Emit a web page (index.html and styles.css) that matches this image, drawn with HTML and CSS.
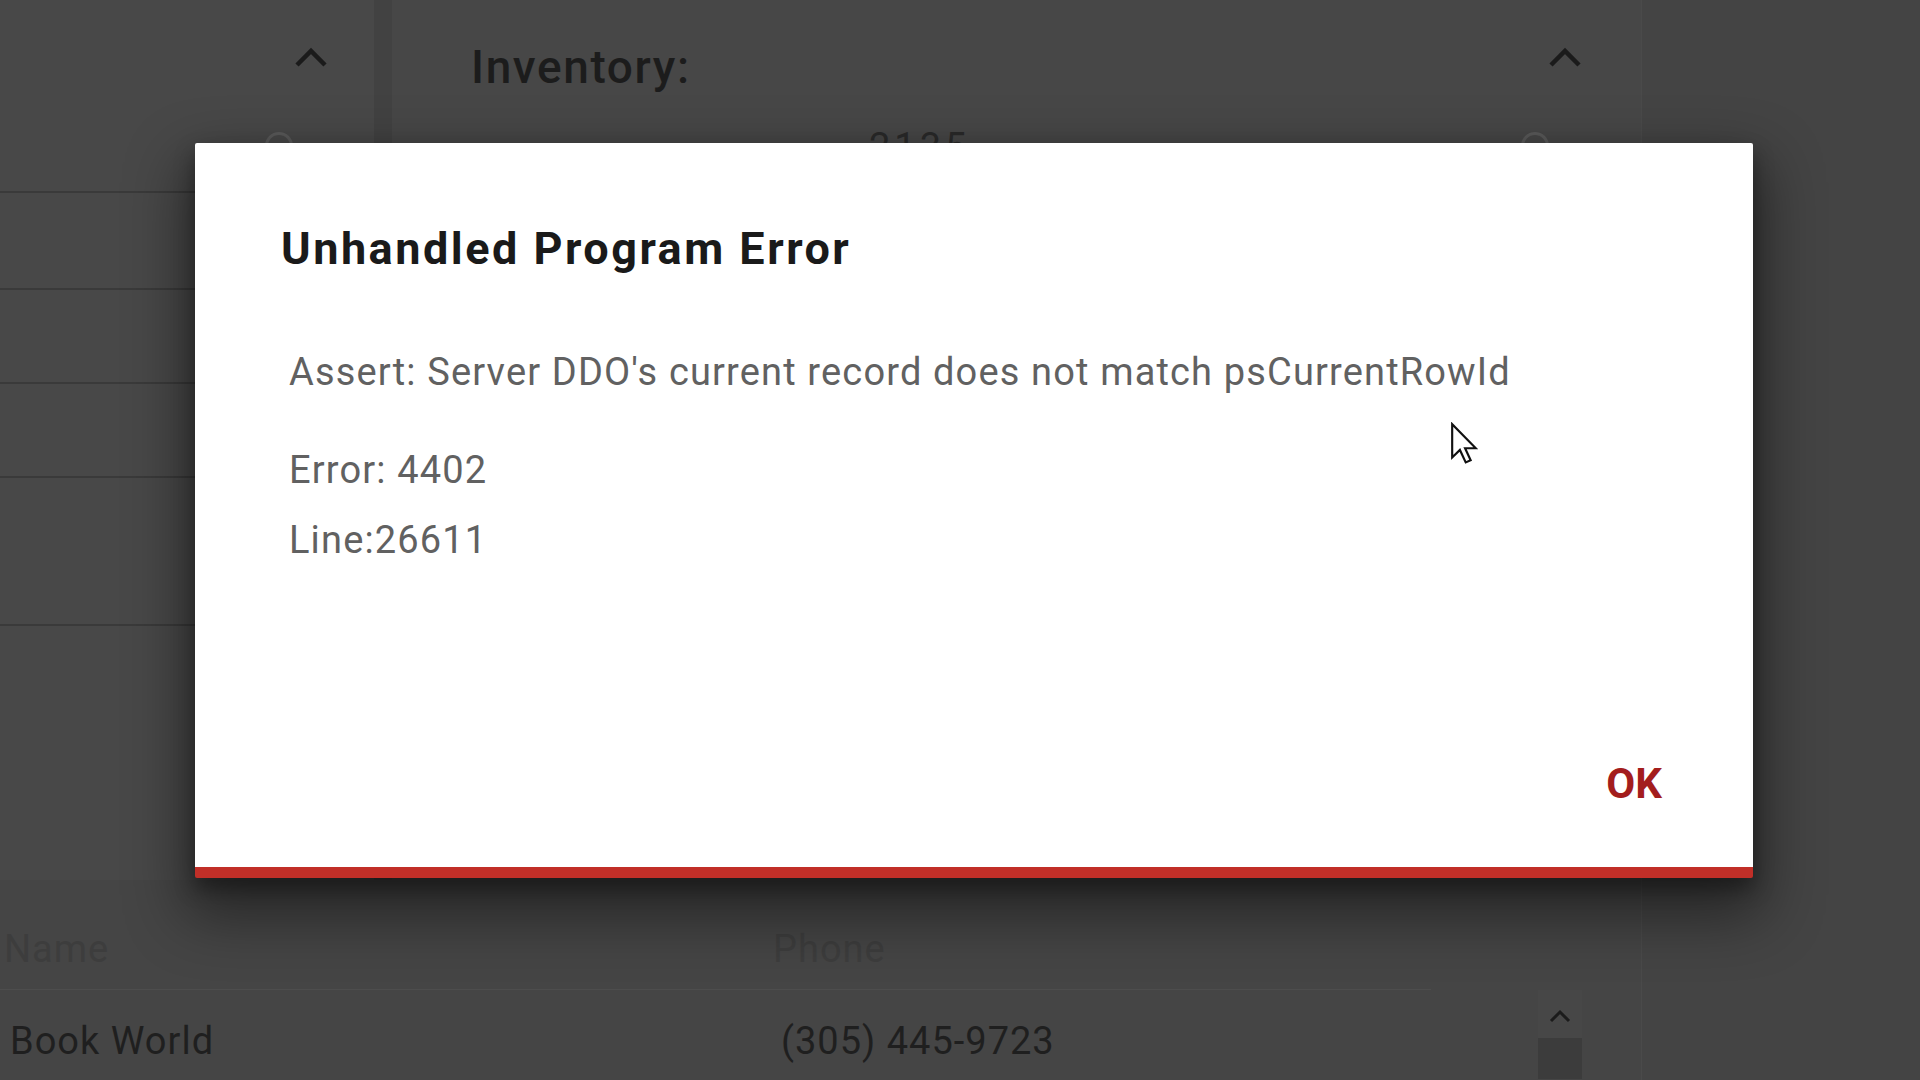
FILE: index.html
```html
<!DOCTYPE html>
<html lang="en">
<head>
<meta charset="utf-8">
<title>Unhandled Program Error</title>
<link rel="stylesheet" href="styles.css">
</head>
<body>
<div class="app">
  <div class="main">
    <div class="top">
      <aside class="side">
        <div class="side-head">
          <svg class="chev" viewBox="0 0 34 20" width="34" height="20"><path d="M3 18 L17 4 L31 18" fill="none" stroke="#1b1b1b" stroke-width="4.5"/></svg>
          <span class="ring ring-side"></span>
        </div>
        <div class="side-row r1"></div>
        <div class="side-row r2"></div>
        <div class="side-row r3"></div>
        <div class="side-row r4"></div>
      </aside>
      <section class="inv">
        <div class="inv-head">
          <h2 class="inv-title">Inventory:</h2>
          <svg class="chev" viewBox="0 0 34 20" width="34" height="20"><path d="M3 18 L17 4 L31 18" fill="none" stroke="#1b1b1b" stroke-width="4.5"/></svg>
        </div>
        <div class="inv-sub">
          <span class="num">2135</span>
          <span class="ring ring-inv"></span>
        </div>
      </section>
    </div>
    <div class="table">
      <div class="thead">
        <span class="th th-name">Name</span>
        <span class="th">Phone</span>
      </div>
      <div class="trow">
        <span class="td">Book World</span>
        <span class="td">(305) 445-9723</span>
        <div class="scroll">
          <svg class="chev-sm" viewBox="0 0 24 14" width="24" height="14"><path d="M3 12 L12 3 L21 12" fill="none" stroke="#1b1b1b" stroke-width="3"/></svg>
          <div class="thumb"></div>
        </div>
      </div>
    </div>
  </div>
  <div class="rail"></div>
</div>

<div class="dialog" role="alertdialog" aria-labelledby="dlg-title">
  <h1 class="dlg-title" id="dlg-title">Unhandled Program Error</h1>
  <div class="dlg-body">
    <p class="msg">Assert: Server DDO's current record does not match psCurrentRowId</p>
    <p class="msg">Error: 4402<br>Line:26611</p>
  </div>
  <div class="dlg-foot">
    <button class="ok" type="button">OK</button>
  </div>
</div>

<svg class="cursor" viewBox="0 0 13 20" width="28" height="43">
  <path d="M1 1 L1 16.5 L4.6 13 L7.3 18.8 L9.6 17.8 L7 12.2 L12 12.2 Z" fill="#fff" stroke="#111" stroke-width="1" stroke-linejoin="miter"/>
</svg>
</body>
</html>
```

FILE: styles.css
```css
* { box-sizing: border-box; }

html, body {
  margin: 0;
  padding: 0;
  width: 1920px;
  height: 1080px;
  overflow: hidden;
}

body {
  background: #464646;
  font-family: Roboto, "Noto Sans", "Liberation Sans", sans-serif;
  position: relative;
}

.app {
  display: grid;
  grid-template-columns: 1641px 279px;
  height: 1080px;
}

.main {
  display: flex;
  flex-direction: column;
}

.top {
  display: grid;
  grid-template-columns: 392px 1249px;
  height: 880px;
}

/* left side panel */
.side {
  background: #484848;
  border-right: 18px solid #424242;
  display: flex;
  flex-direction: column;
}

.side-head {
  height: 193px;
  border-bottom: 2px solid #3a3a3a;
  display: flex;
  flex-direction: column;
  align-items: flex-end;
  padding: 47px 46px 0 0;
}

.side-head .chev { display: block; }

.ring {
  display: block;
  width: 28px;
  height: 28px;
  border: 3px solid #5a5a5a;
  border-radius: 50%;
}

.ring-side {
  margin: 65px 35px 0 0;
}

.side-row { border-bottom: 2px solid #3a3a3a; }
.r1 { height: 97px; }
.r2 { height: 94px; }
.r3 { height: 94px; }
.r4 { height: 148px; }

/* inventory panel */
.inv {
  background: #474747;
  display: flex;
  flex-direction: column;
}

.inv-head {
  display: flex;
  justify-content: space-between;
  align-items: flex-start;
  padding: 44px 59px 0 79px;
}

.inv-title {
  margin: 0;
  font-size: 46px;
  line-height: 46px;
  font-weight: 500;
  color: #1c1c1c;
  letter-spacing: 1.6px;
}

.inv-head .chev { margin-top: 3px; }

.inv-sub {
  display: flex;
  justify-content: space-between;
  align-items: flex-start;
  padding: 0 92px 0 477px;
  margin-top: 38px;
}

.num {
  font-size: 38px;
  line-height: 38px;
  color: #2a2a2a;
  letter-spacing: 4px;
}

.ring-inv { margin-top: 4px; }

/* bottom table */
.table {
  flex: 1;
  background: #454545;
}

.thead {
  display: grid;
  grid-template-columns: 769px 1fr;
  padding: 50px 0 21px 4px;
  border-bottom: 1px solid #4d4d4d;
  margin-right: 210px;
}

.th {
  font-size: 38px;
  line-height: 38px;
  color: #3d3d3d;
  letter-spacing: 1px;
}

.trow {
  display: grid;
  grid-template-columns: 771px 1fr 44px;
  align-items: start;
  padding: 0 59px 0 10px;
  height: 89px;
}

.td {
  padding-top: 32px;
  font-size: 38px;
  line-height: 38px;
  color: #1f1f1f;
  letter-spacing: 1px;
}

.scroll {
  display: flex;
  flex-direction: column;
  align-items: center;
  padding-top: 19px;
  background: #474747;
  height: 89px;
}

.chev-sm { display: block; }

.thumb {
  margin-top: 15px;
  width: 44px;
  flex: 1;
  background: #3c3c3c;
}

.rail {
  background: #444444;
  border-left: 1px solid #4a4a4a;
}

/* dialog */
.dialog {
  position: absolute;
  left: 195px;
  top: 143px;
  width: 1558px;
  height: 735px;
  background: #ffffff;
  border-bottom: 11px solid #c12f28;
  border-radius: 2px;
  box-shadow: 0 28px 60px 10px rgba(0, 0, 0, 0.45), 0 10px 20px rgba(0, 0, 0, 0.35);
  display: flex;
  flex-direction: column;
  padding: 84px 91px 62px 86px;
}

.dlg-title {
  margin: 0;
  font-size: 45px;
  line-height: 44px;
  font-weight: 700;
  color: #1a1a1a;
  letter-spacing: 2.5px;
}

.dlg-body {
  margin: 66px 0 0 8px;
}

.msg {
  margin: 0 0 28px;
  font-size: 38px;
  line-height: 70px;
  color: #616161;
  letter-spacing: 1.15px;
}

.dlg-foot {
  margin-top: auto;
  display: flex;
  justify-content: flex-end;
}

.ok {
  border: 0;
  background: none;
  padding: 0;
  margin: 0;
  font-family: Roboto, "Noto Sans", "Liberation Sans", sans-serif;
  font-size: 42px;
  line-height: 42px;
  font-weight: 700;
  color: #a31d1d;
}

.cursor {
  position: absolute;
  left: 1450px;
  top: 422px;
}
```
